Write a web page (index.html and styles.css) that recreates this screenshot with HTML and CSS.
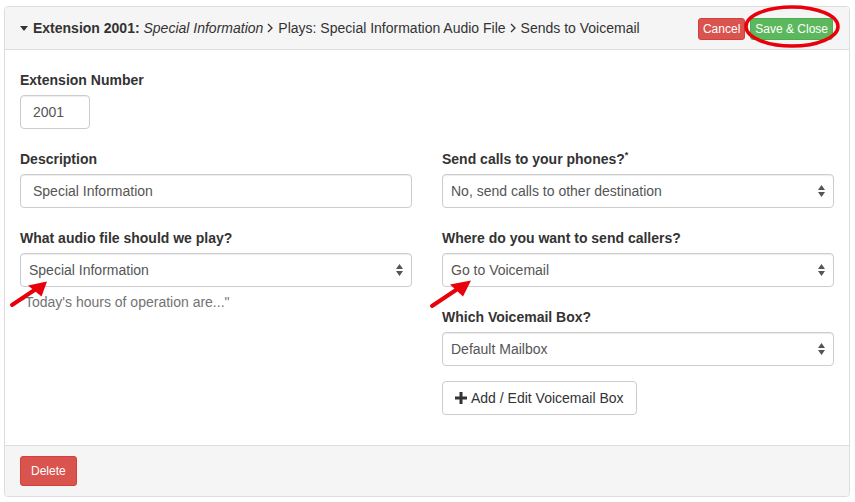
FILE: index.html
```html
<!DOCTYPE html>
<html>
<head>
<meta charset="utf-8">
<link rel="stylesheet" href="styles.css">
</head>
<body>
<div class="panel">
  <div class="panel-heading">
    <div class="title"><svg class="caret" width="8" height="5" viewBox="0 0 8 5"><path d="M0 0H8L4 5Z" fill="#333"/></svg><b>Extension 2001:</b> <i>Special Information</i><svg class="chev" width="6" height="10" viewBox="0 0 6 10"><path d="M1 1L5 5L1 9" fill="none" stroke="#333" stroke-width="1.3"/></svg>Plays: Special Information Audio File<svg class="chev" width="6" height="10" viewBox="0 0 6 10"><path d="M1 1L5 5L1 9" fill="none" stroke="#333" stroke-width="1.3"/></svg>Sends to Voicemail</div>
    <div class="actions">
      <span class="btn btn-xs btn-danger">Cancel</span>
      <span class="btn btn-xs btn-success">Save &amp; Close</span>
    </div>
  </div>
  <div class="panel-body">
    <div class="group">
      <div class="label">Extension Number</div>
      <div class="input short">2001</div>
    </div>
    <div class="cols">
      <div class="col">
        <div class="group">
          <div class="label">Description</div>
          <div class="input">Special Information</div>
        </div>
        <div class="group">
          <div class="label">What audio file should we play?</div>
          <div class="select"><span>Special Information</span><svg width="7" height="12" viewBox="0 0 7 12"><path d="M0 5H7L3.5 0Z M0 7H7L3.5 12Z" fill="#555"/></svg></div>
          <div class="help">"Today's hours of operation are..."</div>
        </div>
      </div>
      <div class="col">
        <div class="group">
          <div class="label">Send calls to your phones?<sup>*</sup></div>
          <div class="select"><span>No, send calls to other destination</span><svg width="7" height="12" viewBox="0 0 7 12"><path d="M0 5H7L3.5 0Z M0 7H7L3.5 12Z" fill="#555"/></svg></div>
        </div>
        <div class="group">
          <div class="label">Where do you want to send callers?</div>
          <div class="select"><span>Go to Voicemail</span><svg width="7" height="12" viewBox="0 0 7 12"><path d="M0 5H7L3.5 0Z M0 7H7L3.5 12Z" fill="#555"/></svg></div>
        </div>
        <div class="group tight">
          <div class="label">Which Voicemail Box?</div>
          <div class="select"><span>Default Mailbox</span><svg width="7" height="12" viewBox="0 0 7 12"><path d="M0 5H7L3.5 0Z M0 7H7L3.5 12Z" fill="#555"/></svg></div>
        </div>
        <div class="group last">
          <span class="btn btn-default"><svg width="12" height="12" viewBox="0 0 12 12"><path d="M4.5 0H7.5V4.5H12V7.5H7.5V12H4.5V7.5H0V4.5H4.5Z" fill="#333"/></svg>Add / Edit Voicemail Box</span>
        </div>
      </div>
    </div>
  </div>
  <div class="panel-footer">
    <span class="btn btn-sm btn-danger">Delete</span>
  </div>
</div>
<svg class="annot" width="855" height="502" viewBox="0 0 855 502">
  <ellipse cx="792" cy="26.5" rx="46" ry="19.5" fill="none" stroke="#e8000b" stroke-width="3.5"/>
  <path d="M12 305L36 289" stroke="#e8000b" stroke-width="4" stroke-linecap="round"/>
  <path d="M47 281.5L28 285.5L41.5 296.5Z" fill="#e8000b"/>
  <path d="M432 306L456 290" stroke="#e8000b" stroke-width="4" stroke-linecap="round"/>
  <path d="M471 280.5L450 284.5L463 296.5Z" fill="#e8000b"/>
</svg>
</body>
</html>
```
FILE: styles.css
```css
* { box-sizing: border-box; }
html, body { margin: 0; padding: 0; background: #fff; }
body {
  padding: 6px 5px 0 4px;
  font-family: "Liberation Sans", Arial, sans-serif;
  font-size: 14px;
  line-height: 20px;
  color: #333;
  position: relative;
}
.panel {
  border: 1px solid #ddd;
  border-radius: 4px;
  box-shadow: 0 1px 1px rgba(0,0,0,0.05);
  height: 491px;
  display: flex;
  flex-direction: column;
}
.panel-heading {
  height: 43px;
  background: #f5f5f5;
  border-bottom: 1px solid #ddd;
  border-radius: 3px 3px 0 0;
  display: flex;
  align-items: center;
  justify-content: space-between;
  padding: 0 16px 0 15px;
}
.title { white-space: nowrap; }
.title b { font-weight: bold; }
.title svg { vertical-align: middle; }
.caret { margin-right: 5px; position: relative; top: -1px; }
.chev { margin: 0 5px 0 4px; position: relative; top: -1px; }
.actions { display: flex; gap: 5px; margin-top: 1px; }
.btn {
  display: inline-flex;
  align-items: center;
  justify-content: center;
  border: 1px solid transparent;
  border-radius: 4px;
  white-space: nowrap;
}
.btn-xs { font-size: 12px; line-height: 18px; padding: 1px 4px; border-radius: 3px; }
.btn-sm { font-size: 12px; line-height: 18px; padding: 5px 10px; border-radius: 3px; }
.btn-danger { background: #d9534f; border-color: #d43f3a; color: #fff; }
.btn-success { background: #5cb85c; border-color: #4cae4c; color: #fff; }
.btn-default {
  background: #fff;
  border-color: #ccc;
  color: #333;
  height: 34px;
  padding: 6px 12px;
  gap: 4px;
}
.panel-body {
  flex: 1;
  padding: 20px 15px 0;
}
.group { margin-bottom: 20px; }
.group.tight { margin-bottom: 15px; }
.group.last { margin-bottom: 0; }
.label { font-weight: bold; margin-bottom: 5px; }
.label sup { font-size: 9px; line-height: 0; vertical-align: 6px; }
.input, .select {
  height: 34px;
  border: 1px solid #ccc;
  border-radius: 4px;
  color: #555;
  box-shadow: inset 0 1px 1px rgba(0,0,0,0.075);
  display: flex;
  align-items: center;
}
.input { padding: 0 12px; }
.input.short { width: 70px; }
.select { justify-content: space-between; padding: 0 8px 0 8px; background: #fff; }
.help { margin-top: 5px; color: #737373; }
.cols { display: grid; grid-template-columns: 1fr 1fr; column-gap: 30px; }
.panel-footer {
  height: 51px;
  background: #f5f5f5;
  border-top: 1px solid #ddd;
  border-radius: 0 0 3px 3px;
  padding: 10px 15px;
}
.annot { position: absolute; left: 0; top: 0; pointer-events: none; }
```
